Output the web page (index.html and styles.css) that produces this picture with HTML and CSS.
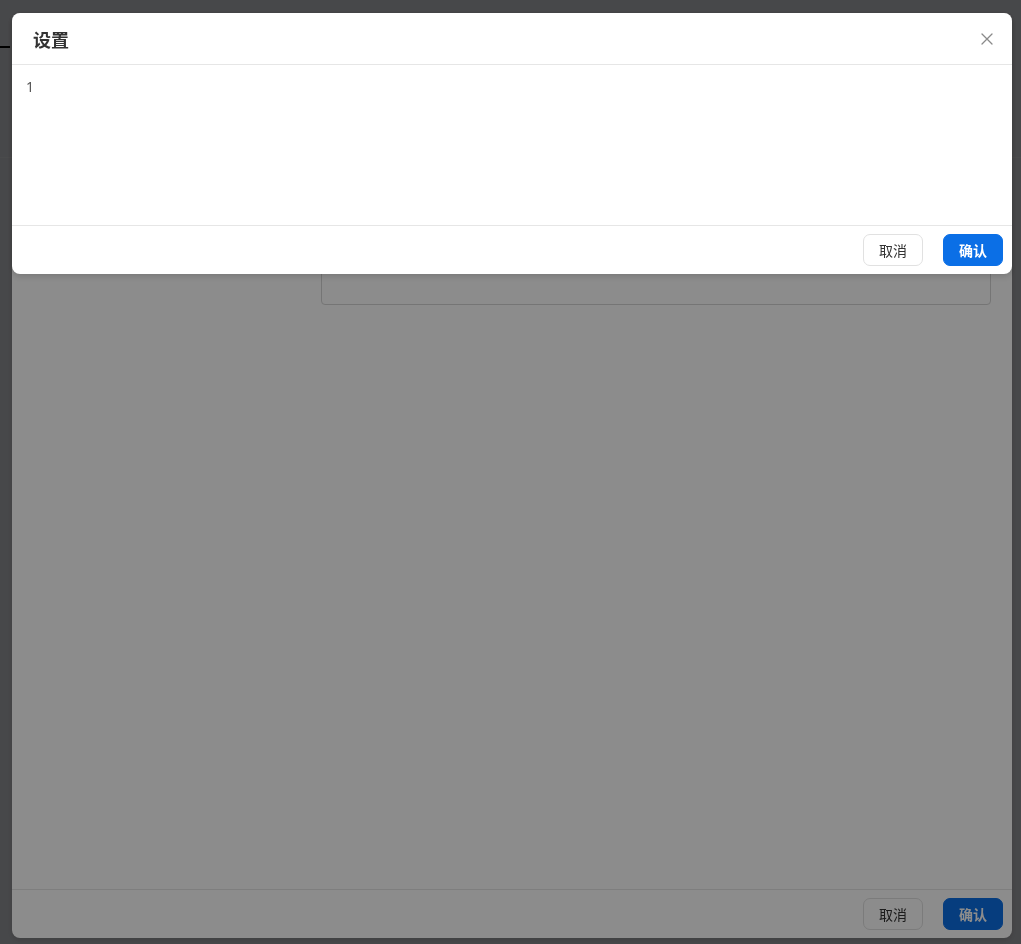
FILE: index.html
```html
<!DOCTYPE html>
<html lang="zh-CN">
<head>
  <meta charset="UTF-8">
  <meta name="viewport" content="width=device-width, initial-scale=1.0">
  <title>设置</title>
  <link rel="stylesheet" href="styles.css">
</head>
<body>
  <div class="page">
    <div class="page-header">
      <span class="page-tab"></span>
    </div>
    <div class="page-toolbar"></div>
  </div>

  <div class="mask"></div>

  <div class="modal modal--large">
    <div class="modal__header">
      <span class="modal__title">设置</span>
    </div>
    <div class="modal__body modal__body--form">
      <div class="form-label"></div>
      <div class="form-field"></div>
    </div>
    <div class="modal__footer">
      <button class="btn">取消</button>
      <button class="btn btn--primary">确认</button>
    </div>
  </div>

  <div class="mask"></div>

  <div class="modal modal--small">
    <div class="modal__header">
      <span class="modal__title">设置</span>
      <span class="modal__close">
        <svg width="12" height="12" viewBox="0 0 12 12">
          <path d="M1 1 L11 11 M11 1 L1 11" stroke="#8a8a8a" stroke-width="1.3" fill="none" stroke-linecap="round"/>
        </svg>
      </span>
    </div>
    <div class="modal__body">1</div>
    <div class="modal__footer">
      <button class="btn">取消</button>
      <button class="btn btn--primary">确认</button>
    </div>
  </div>
</body>
</html>
```

FILE: styles.css
```css
* {
  box-sizing: border-box;
}

body {
  margin: 0;
  font-family: "Noto Sans", "Noto Sans CJK SC", sans-serif;
  font-size: 14px;
  color: #333;
  background: #eceef3;
  height: 944px;
  overflow: hidden;
}

.page-header {
  height: 112px;
  border-bottom: 1px solid #f6f7fa;
}

.page-tab {
  display: block;
  width: 10px;
  height: 2px;
  background: #000;
  margin-top: 46px;
}

.mask {
  position: fixed;
  inset: 0;
  background: rgba(0, 0, 0, 0.45);
}

.modal {
  position: fixed;
  top: 13px;
  left: 12px;
  width: 1000px;
  background: #fff;
  border-radius: 8px;
  display: flex;
  flex-direction: column;
  box-shadow: 0 2px 6px rgba(0, 0, 0, 0.15);
}

.modal--large {
  height: 925px;
}

.modal__header {
  height: 52px;
  padding: 0 20px 0 21px;
  display: flex;
  align-items: center;
  justify-content: space-between;
  border-bottom: 1px solid #e6e6e6;
}

.modal__title {
  font-size: 18px;
  font-weight: bold;
  color: #333;
}

.modal__close {
  display: flex;
  margin-right: -1px;
}

.modal__body {
  flex: none;
  height: 160px;
  padding: 12px 14px;
  line-height: 20px;
  color: #555;
}

.modal__body--form {
  flex: 1;
  height: auto;
  display: grid;
  grid-template-columns: 295px 1fr;
  align-items: end;
  padding: 0 21px 0 14px;
}

.form-field {
  height: 200px;
  margin-bottom: 584px;
  border: 1px solid #d6d6d6;
  border-radius: 4px;
}

.modal__footer {
  height: 49px;
  border-top: 1px solid #e6e6e6;
  display: flex;
  align-items: center;
  justify-content: flex-end;
  gap: 20px;
  padding: 0 9px 0 0;
}

.btn {
  height: 32px;
  width: 60px;
  border: 1px solid #e1e1e1;
  border-radius: 7px;
  background: #fff;
  color: #333;
  font-family: inherit;
  font-size: 14px;
  cursor: pointer;
}

.btn--primary {
  border-color: #0b6fe6;
  background: #0b6fe6;
  color: #fff;
  font-weight: bold;
}
```
